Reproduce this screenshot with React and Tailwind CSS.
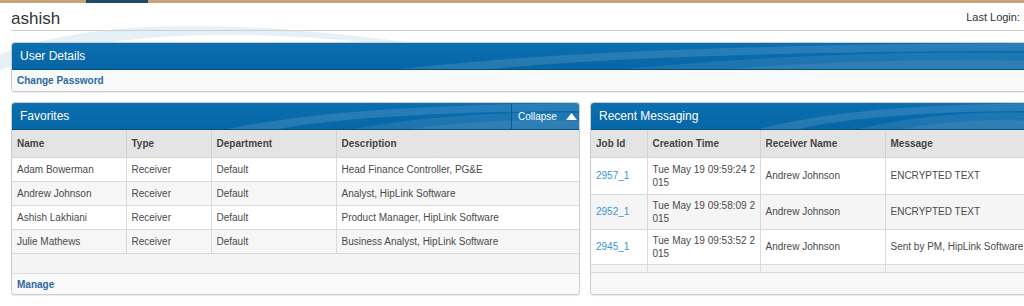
import React from 'react';

const favorites = [
  { name: 'Adam Bowerman', type: 'Receiver', dept: 'Default', desc: 'Head Finance Controller, PG&E' },
  { name: 'Andrew Johnson', type: 'Receiver', dept: 'Default', desc: 'Analyst, HipLink Software' },
  { name: 'Ashish Lakhiani', type: 'Receiver', dept: 'Default', desc: 'Product Manager, HipLink Software' },
  { name: 'Julie Mathews', type: 'Receiver', dept: 'Default', desc: 'Business Analyst, HipLink Software' },
];

const messages = [
  { id: '2957_1', time: ['Tue May 19 09:59:24 2', '015'], receiver: 'Andrew Johnson', msg: 'ENCRYPTED TEXT' },
  { id: '2952_1', time: ['Tue May 19 09:58:09 2', '015'], receiver: 'Andrew Johnson', msg: 'ENCRYPTED TEXT' },
  { id: '2945_1', time: ['Tue May 19 09:53:52 2', '015'], receiver: 'Andrew Johnson', msg: 'Sent by PM, HipLink Software' },
];

// decorative swoosh drawn over the blue panel headers
const Swoosh = () => (
  <svg className="absolute inset-0 w-full h-full pointer-events-none" viewBox="0 0 1000 26" preserveAspectRatio="none">
    <path d="M380 26 C 520 10, 700 2, 1000 0 L1000 8 C 760 8, 560 16, 470 26 Z" fill="#ffffff" opacity="0.12" />
    <path d="M600 26 C 720 14, 860 8, 1000 10 L1000 26 Z" fill="#ffffff" opacity="0.09" />
    <path d="M700 26 C 800 18, 900 16, 1000 18 L1000 26 Z" fill="#ffffff" opacity="0.08" />
  </svg>
);

const PanelHeader = ({ title, children }) => (
  <div className="relative h-[27px] flex items-stretch bg-gradient-to-b from-[#0b6fb1] to-[#0766a6] border-b border-[#05507f] rounded-t-[3px] overflow-hidden">
    <Swoosh />
    <div className="relative flex-1 flex items-center pl-[8px] text-[12px] text-white">{title}</div>
    {children}
  </div>
);

const App = () => {
  return (
    <div className="relative w-[1024px] h-[306px] overflow-hidden bg-white font-['Liberation_Sans',Arial,sans-serif] text-[#4a4a4a]">
      {/* faint background swoosh */}
      <svg className="absolute left-0 top-[14px] w-[420px] h-[60px] pointer-events-none" viewBox="0 0 420 60" preserveAspectRatio="none">
        <path d="M0 40 C 80 10, 200 0, 420 30 L420 34 C 220 10, 90 20, 0 56 Z" fill="#dce9f3" opacity="0.7" />
      </svg>

      {/* top strip */}
      <div className="relative h-[3px] bg-[#c9a378] flex">
        <div className="ml-[86px] w-[62px] bg-[#1d4b67]" />
      </div>

      {/* title row */}
      <div className="relative ml-[11px] h-[28px] flex items-center justify-between border-b border-[#cfcfcf] pr-[4px]">
        <span className="text-[17px] leading-none text-[#333] mt-[3px]">ashish</span>
        <span className="text-[11px] text-[#333] mt-[1px]">Last Login:</span>
      </div>

      <div className="relative w-[1035px] pl-[11px] pt-[11px]">
        {/* User Details */}
        <div className="border border-[#cdcdcd] rounded-[3px] shadow-[0_1px_1px_rgba(0,0,0,0.08)]">
          <PanelHeader title="User Details" />
          <div className="h-[21px] bg-[#f8f9fb] flex items-center pl-[5px] text-[10px] font-bold text-[#2d6a9b]">
            Change Password
          </div>
        </div>

        <div className="flex gap-[10px] mt-[10px]">
          {/* Favorites */}
          <div className="w-[569px] h-[193px] flex flex-col border border-[#cdcdcd] rounded-[3px] shadow-[0_1px_1px_rgba(0,0,0,0.08)] bg-[#f4f4f4]">
            <PanelHeader title="Favorites">
              <div className="relative w-[68px] flex items-center gap-[9px] pl-[6px] border-l border-[#0b5c94] text-[10px] text-white">
                <span>Collapse</span>
                <svg width="11" height="7" viewBox="0 0 11 7"><path d="M5.5 0 L11 7 L0 7 Z" fill="#fff" /></svg>
              </div>
            </PanelHeader>
            <table className="w-full table-fixed border-collapse text-[10px]">
              <colgroup>
                <col className="w-[114px]" />
                <col className="w-[85px]" />
                <col className="w-[125px]" />
                <col />
              </colgroup>
              <thead>
                <tr className="h-[27px] bg-[#e4e4e4] text-left">
                  {['Name', 'Type', 'Department', 'Description'].map((h) => (
                    <th key={h} className="font-bold text-[#444] pl-[5px] border-r last:border-r-0 border-b border-[#d2d2d2]">{h}</th>
                  ))}
                </tr>
              </thead>
              <tbody>
                {favorites.map((f, i) => (
                  <tr key={f.name} className={`h-[24px] ${i % 2 ? 'bg-[#f6f6f6]' : 'bg-white'}`}>
                    <td className="pl-[5px] border-r border-b border-[#dadada]">{f.name}</td>
                    <td className="pl-[5px] border-r border-b border-[#dadada]">{f.type}</td>
                    <td className="pl-[5px] border-r border-b border-[#dadada]">{f.dept}</td>
                    <td className="pl-[5px] border-b border-[#dadada]">{f.desc}</td>
                  </tr>
                ))}
              </tbody>
            </table>
            <div className="flex-1 border-b border-[#dcdcdc]" />
            <div className="h-[20px] bg-[#f9f9f9] flex items-center pl-[5px] text-[10px] font-bold text-[#2d6a9b] rounded-b-[3px]">
              Manage
            </div>
          </div>

          {/* Recent Messaging */}
          <div className="flex-1 h-[193px] flex flex-col border border-[#cdcdcd] rounded-[3px] shadow-[0_1px_1px_rgba(0,0,0,0.08)] bg-[#f7f7f7]">
            <PanelHeader title="Recent Messaging" />
            <table className="w-full table-fixed border-collapse text-[10px]">
              <colgroup>
                <col className="w-[56px]" />
                <col className="w-[113px]" />
                <col className="w-[125px]" />
                <col />
              </colgroup>
              <thead>
                <tr className="h-[27px] bg-[#e4e4e4] text-left">
                  {['Job Id', 'Creation Time', 'Receiver Name', 'Message'].map((h) => (
                    <th key={h} className="font-bold text-[#444] pl-[5px] border-r last:border-r-0 border-b border-[#d2d2d2]">{h}</th>
                  ))}
                </tr>
              </thead>
              <tbody>
                {messages.map((m, i) => (
                  <tr key={m.id} className={`${i === 0 ? 'h-[37px]' : 'h-[35px]'} ${i % 2 ? 'bg-[#f5f5f5]' : 'bg-white'}`}>
                    <td className="pl-[5px] border-r border-b border-[#dadada] text-[#3a95cf]">{m.id}</td>
                    <td className="pl-[5px] border-r border-b border-[#dadada] leading-[13px] whitespace-nowrap">
                      {m.time[0]}<br />{m.time[1]}
                    </td>
                    <td className="pl-[5px] border-r border-b border-[#dadada]">{m.receiver}</td>
                    <td className="pl-[5px] border-b border-[#dadada] whitespace-nowrap">{m.msg}</td>
                  </tr>
                ))}
                <tr className="h-[8px] bg-[#f3f3f3]">
                  <td className="border-r border-b border-[#dadada]" />
                  <td className="border-r border-b border-[#dadada]" />
                  <td className="border-r border-b border-[#dadada]" />
                  <td className="border-b border-[#dadada]" />
                </tr>
              </tbody>
            </table>
            <div className="flex-1 bg-[#f8f8f8] rounded-b-[3px]" />
          </div>
        </div>
      </div>
    </div>
  );
};

export default App;
